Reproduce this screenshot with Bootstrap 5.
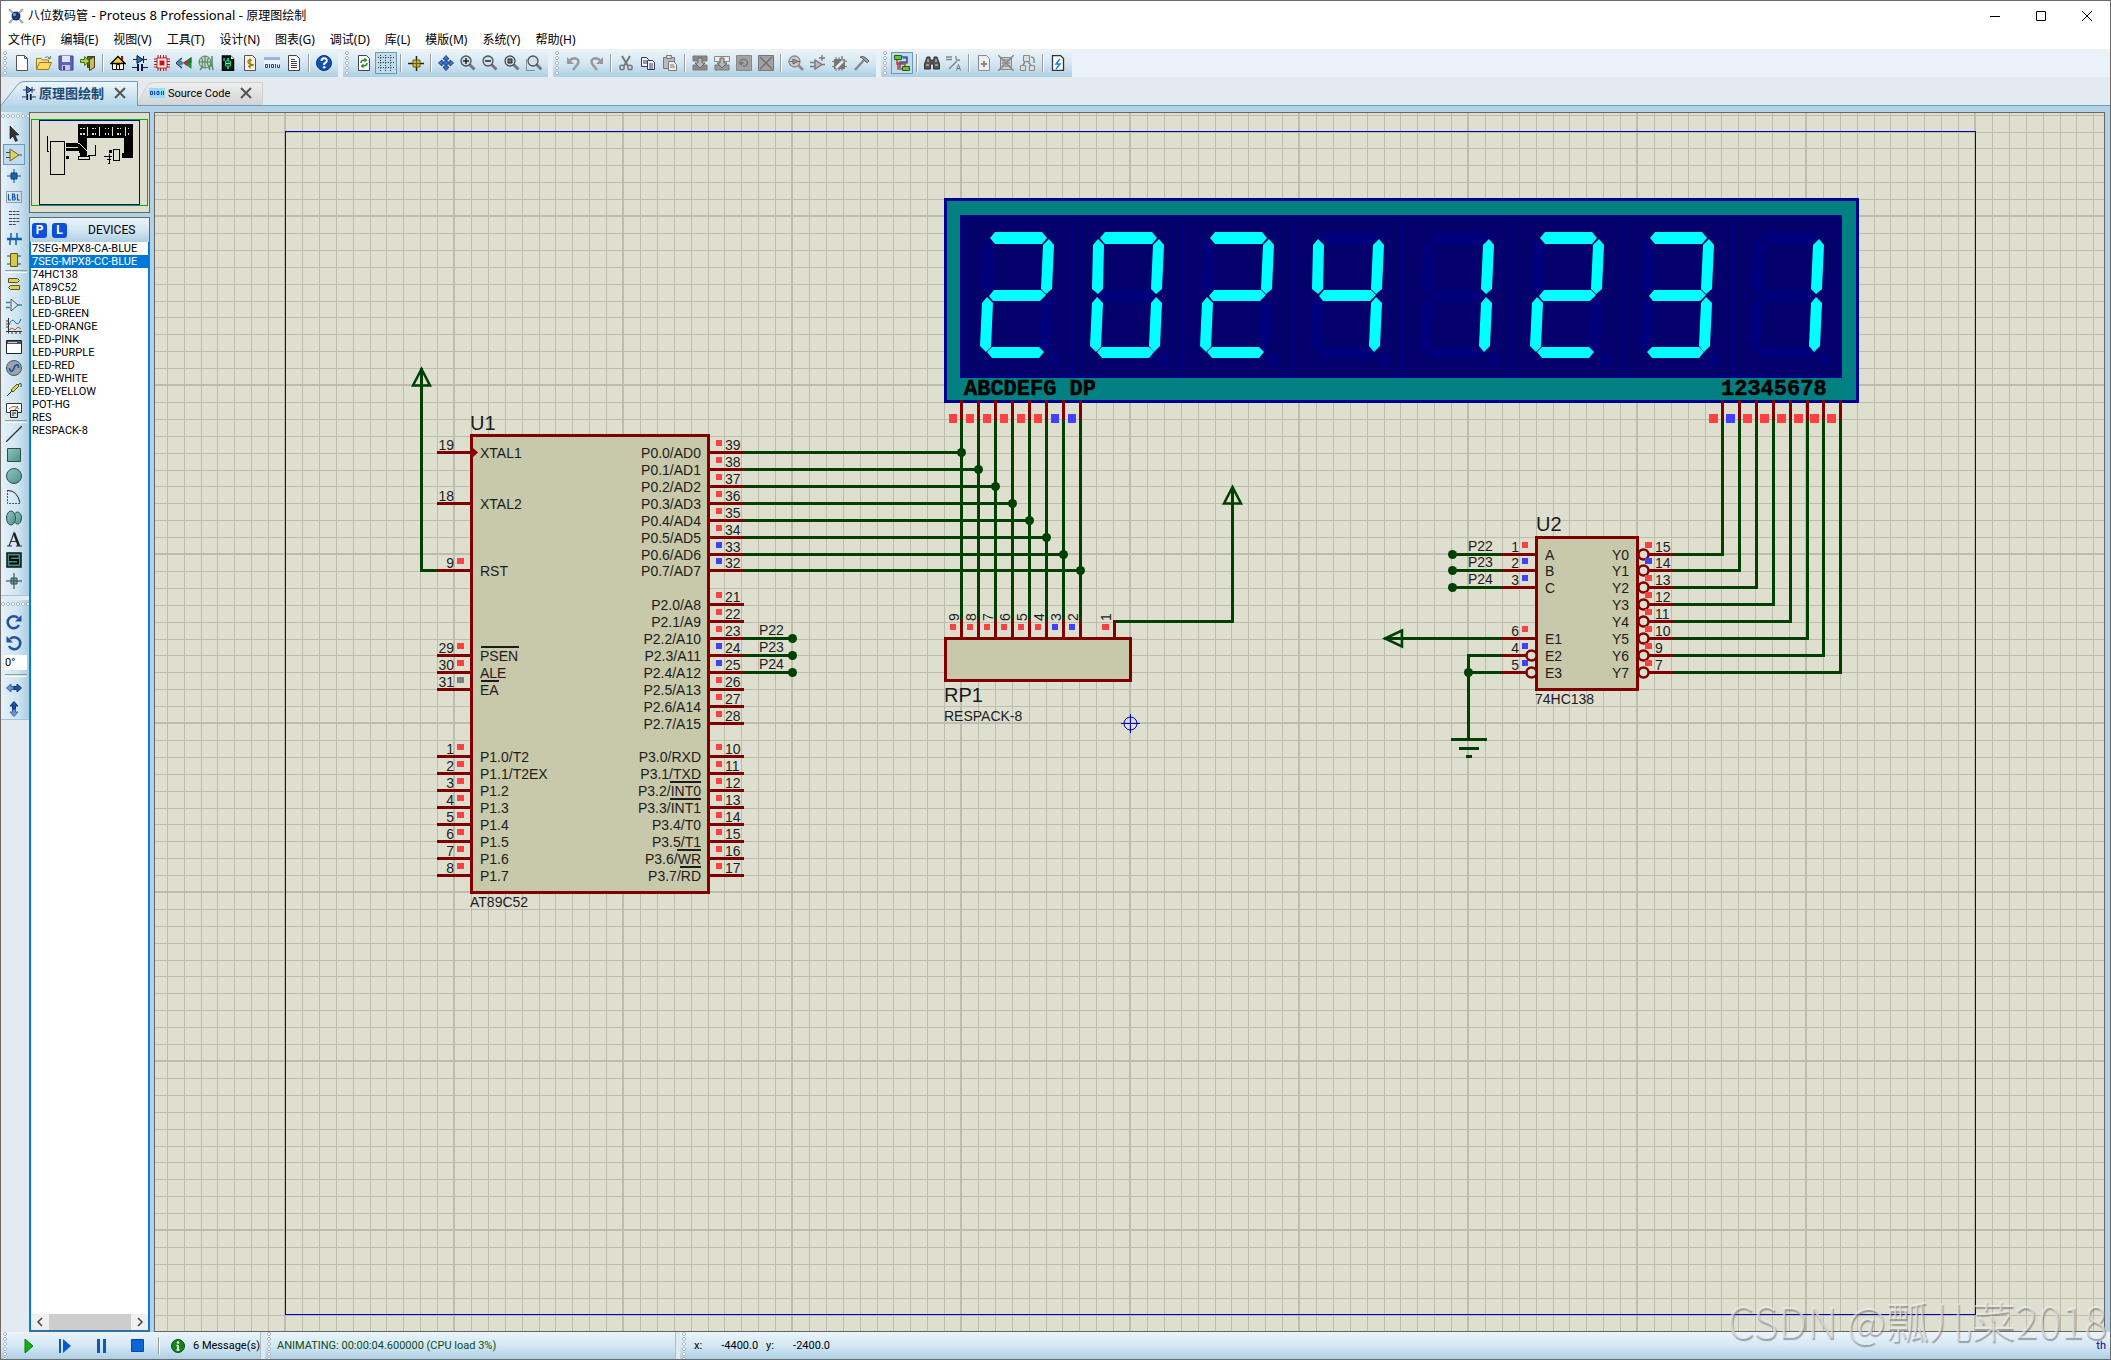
<!DOCTYPE html>
<html lang="zh-CN">
<head>
<meta charset="utf-8">
<meta name="viewport" content="width=device-width, initial-scale=1">
<title>八位数码管 - Proteus 8 Professional - 原理图绘制</title>
<link href="https://cdn.jsdelivr.net/npm/bootstrap@5.3.0/dist/css/bootstrap.min.css" rel="stylesheet">
<style>
  :root { --edge:#6e6a6a; --bar:#e3ebf1; --grad:linear-gradient(#e8f3fa,#d3e6f2 50%,#aecfe3); }
  body { font-family:Roboto,"Noto Sans CJK SC",sans-serif; font-size:11px; line-height:13px; color:#000; background:var(--bar); border:1px solid var(--edge); }
  button { font:inherit; color:inherit; background:none; border:0; padding:0; }
  svg { display:block; }
  .titlebar { height:29px; font-family:"Noto Sans","Noto Sans CJK SC",sans-serif; font-size:12px; padding-left:7px; background:#fff; }
  .latin { font-size:13px; }
  .winbtn { width:46px; height:29px; }
  .menus { height:19px; font-family:"Noto Sans","Noto Sans CJK SC",sans-serif; font-size:12px; line-height:19px; gap:1px; background:#fff; }
  .menus button { padding:0 7px; }
  .toolrow { height:28px; background:#e9f2f9; border-top:2px solid #f0f0f0; gap:5px; }
  .toolgroup { background:var(--grad); height:26px; padding:0 3px 2px 0; }
  .grip { width:10px; height:24px; background:radial-gradient(circle at 4px 2px,#fff 1px,#a9b7c2 1px,#a9b7c2 2px,transparent 2px) 0 0/10px 5px repeat-y; }
  .tool { width:22px; height:22px; display:grid; place-items:center; flex:none; border:1px solid transparent; }
  .pressed { border-color:#6a9ab8; background:#bfdcec; }
  .vsep { width:8px; height:18px; background:linear-gradient(#9a9a9a,#9a9a9a) 3px 0/1px 100% no-repeat,linear-gradient(#fff,#fff) 4px 0/1px 100% no-repeat; }
  .tabrow { height:29px; padding-top:4px; border-bottom:1px solid #6c9fbe; }
  .doc-tab { position:relative; height:24px; font-size:11px; }
  .doc-tab > svg:first-child { position:absolute; inset:0; }
  .doc-tab > * { position:relative; }
  .tab-one { width:137px; padding-left:21px; font-weight:700; font-size:13px; color:#1f4a70; gap:3px; }
  .tab-two { width:126px; padding-left:11px; gap:3px; }
  .closer { margin-left:7px; }
  .work { background:#b2d2e5; padding-top:6px; min-height:0; }
  .rail { width:28px; background:var(--bar); }
  .railgroup { width:28px; background:linear-gradient(90deg,#e4f1f9,#cfe5f2 60%,#abcde1); border-bottom:1px solid #a5c4d7; }
  .railgroup .tool { width:22px; height:21px; margin-left:2px; }
  .hgrip { height:11px; background:radial-gradient(circle at 2px 4px,#fff 1px,#a9b7c2 1px,#a9b7c2 2px,transparent 2px) 0 0/5px 10px repeat-x; }
  .hsep { height:3px; margin:0 2px 0 4px; border-top:1px solid #9a9a9a; border-bottom:1px solid #fff; }
  .angle { width:23px; height:15px; margin:2px 0 0 3px; border:0; padding:0 1px; background:#fff; font-size:11px; }
  .side { width:121px; }
  .overview { height:101px; border:1px solid #666; background:#dfdfd0; }
  .picker { border:1px solid #666; margin-top:4px; }
  .picker-head { height:24px; background:var(--grad); padding-left:2px; gap:5px; font-size:12px; }
  .pl { width:15px; height:15px; border-radius:3px; background:#0d50d8; color:#fff; line-height:15px; font-size:12px; font-weight:700; text-align:center; }
  .devs { border:solid #0078d7; border-width:0 1px 1px; background:#fff; }
  .devs li { height:13px; padding-left:1px; white-space:nowrap; }
  .devs .picked { background:#0078d7; color:#fff; }
  .hscroll { height:16px; background:#f0f0f0; }
  .hscroll i { width:82px; background:#cdcdcd; }
  .sheet { margin:0 5px 0 4px; border:1px solid #666; background:#dfdfd0; position:relative; overflow:hidden; min-width:0; }
  .sheet > svg { position:absolute; inset:0; width:100%; height:100%; font-family:"Liberation Sans",Arial,sans-serif; font-size:14px; fill:#1c1c1c; }
  .statusrow { height:27px; background:linear-gradient(#e9f4fb,#d4e8f4 50%,#add0e5); }
  .statusrow .grip { height:27px; }
  .statusrow .cell { border-right:1px solid #a4c0d2; }
  .run { width:36px; display:grid; place-items:center; }
  .gapbar { width:4px; background:#dfe9f0; }
  .readout { width:400px; padding-left:2px; color:#0f4a18; }
  .coord { width:40px; text-align:right; }
  .thou { color:#00009c; }
  .wm { position:absolute; right:3px; bottom:20px; font:300 43px/40px "Noto Sans CJK SC",sans-serif; color:rgba(240,240,240,.6); text-shadow:1px 2px 1px rgba(110,110,110,.6); pointer-events:none; white-space:nowrap; }
</style>
</head>
<body class="d-flex flex-column vh-100 overflow-hidden position-relative">
<svg width="0" height="0" class="position-absolute">
  <defs>
    <linearGradient id="gt" x2="0" y2="1"><stop stop-color="#eef7fc"/><stop offset="1" stop-color="#b4d6ea"/></linearGradient>
    <linearGradient id="gg" x2="0" y2="1"><stop stop-color="#eee"/><stop offset="1" stop-color="#d4d4d4"/></linearGradient>
    <linearGradient id="teal" x2="1" y2="1"><stop stop-color="#8cc6be"/><stop offset="1" stop-color="#4f918b"/></linearGradient>
    <symbol id="new" viewBox="0 0 16 16"><path d="M2.500.5h8l3 3v12h-11z" fill="#fff" stroke="#555"/><path d="M10.500.500v3h3" fill="none" stroke="#555"/></symbol>
    <symbol id="open" viewBox="0 0 16 16"><path d="M.5 14V3.500h5l1 1.500h6v3" fill="#f8e28a" stroke="#9c7a18"/><path d="M.5 14.500l3-7h12l-3 7z" fill="#fbd95c" stroke="#9c7a18"/><path d="M9 2.500q3-2 5 1M12 3.500h2.500V1" fill="none" stroke="#777"/></symbol>
    <symbol id="save" viewBox="0 0 16 16"><path d="M1 1h14v14H2l-1-1z" fill="#5b62c4" stroke="#39408e"/><path d="M4 1h8v6H4z" fill="#e4e6f4"/><path d="M4 10h8v5H4z" fill="#c9cbd8"/><path d="M5 11h2v4H5z" fill="#39408e"/></symbol>
    <symbol id="exit" viewBox="0 0 16 16"><path d="M7.500 1.500h7v11h-7z" fill="#655d2c" stroke="#3d3a22"/><path d="M9.500 4.500l5-3v11l-5 3z" fill="#c9bd55" stroke="#3d3a22"/><path d="M.5 4.500h4v-3l5 4.500-5 4.500v-3h-4z" fill="#a6d84b" stroke="#4a6d12"/></symbol>
    <symbol id="home" viewBox="0 0 16 16"><path d="M11 1h2v5h-2z" fill="#c00"/><path d="M2.500 7.500v7h11v-7" fill="#fff" stroke="#000"/><path d="M1 8.500l7-7 7 7z" fill="#ffd21a" stroke="#000" stroke-width="1.300"/><path d="M6.500 9.500h3v5h-3z" fill="#ffe680" stroke="#000"/></symbol>
    <symbol id="schem" viewBox="0 0 16 16"><path d="M1 4.500h14M11.500 1v7M0 12.500h5M11 12.500h5" stroke="#223" fill="none"/><path d="M6 9v7M10 9v7" stroke="#114" stroke-width="2"/><path d="M5 0.500v8l6-4z" fill="#1779c8" stroke="#114"/></symbol>
    <symbol id="chip" viewBox="0 0 16 16"><path d="M4 0v16M6.500 0v16M9.500 0v16M12 0v16M0 4h16M0 6.500h16M0 9.500h16M0 12h16" stroke="#c11"/><path d="M3 3h10v10H3z" fill="#fff" stroke="#c11"/><path d="M5.500 5.500h5v5h-5z" fill="#c11"/></symbol>
    <symbol id="eye3d" viewBox="0 0 16 16"><path d="M15.500 2v12L7 8z" fill="#18924a"/><path d="M15.500 2v6H7z" fill="#177a3c"/><path d="M11 5v6l-4-3z" fill="#c22d2d"/><path d="M6 3L0 8l6 5" fill="none" stroke="#335" stroke-width="1.300"/><circle cx="4.500" cy="8" r="2.500" fill="#4b86b4"/></symbol>
    <symbol id="globe" viewBox="0 0 16 16"><g fill="none" stroke="#577f63"><circle cx="7" cy="7" r="6" fill="#bcd8bd"/><path d="M1 7h12M7 1v12M3.500 2.500q3 4.500 0 9M10.500 2.500q-3 4.500 0 9"/></g><path d="M14 1v8l-3 4 1 2M14 9l1 6M2 15l3-4" fill="none" stroke="#586" stroke-width="1.500"/></symbol>
    <symbol id="gerber" viewBox="0 0 16 16"><path d="M2.500 1h8l3 3v11.500h-11z" fill="#021" stroke="#000" stroke-width="1.500"/><path d="M11 1v3h3z" fill="#fff"/><path d="M8 3v3M8 11v3M5 8.500h6" stroke="#3fe" stroke-width="1.300"/><path d="M5.500 6h5v5h-5z" fill="none" stroke="#3c5"/><path d="M4 3v3" stroke="#3fe"/></symbol>
    <symbol id="bom" viewBox="0 0 16 16"><path d="M2.500.5h8l3 3v12h-11z" fill="#f4f2e4" stroke="#555"/><path d="M10 5.500Q6 4 6 6.500T10 9.500T6 11.500M8 3.500v10" fill="none" stroke="#9a7b12" stroke-width="1.300"/></symbol>
    <symbol id="code" viewBox="0 0 16 16"><path d="M0 2h16v3H0z" fill="#9db5d8"/><path d="M0 5h16v8H0z" fill="#e9f3fc"/><path d="M1.500 9.500h2v3h-2zM5.500 9v4M7.500 9.500h2v3h-2zM11.500 9v4M13.500 9.500v3h2v-3" fill="none" stroke="#23c"/></symbol>
    <symbol id="notes" viewBox="0 0 16 16"><path d="M2.500.5h8l3 3v12h-11z" fill="#fff" stroke="#444"/><path d="M5 4.500h4M5 6.500h6M5 8.500h6M5 10.500h6M5 12.500h6" stroke="#444"/></symbol>
    <symbol id="help" viewBox="0 0 16 16"><circle cx="8" cy="8" r="7.500" fill="#1650ae" stroke="#0b2f74"/><path d="M5.500 6q0-2.800 2.700-2.800T10.800 6Q10.800 7.300 8.200 8.600V10" fill="none" stroke="#fff" stroke-width="2"/><circle cx="8.200" cy="12.300" r="1.300" fill="#fff"/></symbol>
    <symbol id="redraw" viewBox="0 0 16 16"><path d="M2.500.5h8l3 3v12h-11z" fill="#fff" stroke="#444"/><path d="M5 8q0-3 4-3M11 8q0 3-4 3" fill="none" stroke="#2a8a1c" stroke-width="1.600"/><path d="M8.500 2.500l3 2.500-3 2.500zM7.500 8.500L4.500 11l3 2.500z" fill="#2a8a1c"/></symbol>
    <symbol id="dots" viewBox="0 0 16 16"><path d="M0 2.500h16M0 7.500h16M0 12.500h16M2.500 0v16M7.500 0v16M12.500 0v16" stroke="#333" stroke-dasharray="1 1.500"/></symbol>
    <symbol id="origin" viewBox="0 0 16 16"><path d="M0 8.500h16M8.500 1v15" stroke="#222" stroke-width="1.500"/><path d="M5 5h7v7H5z" fill="#cbb832" stroke="#6a5d08"/><path d="M5 8.500h7M8.500 5v7" stroke="#6a5d08"/></symbol>
    <symbol id="pan" viewBox="0 0 16 16"><path d="M8 .5l3 3.500H9v3h3V5l3.500 3L12 11V9H9v3h2l-3 3.500L5 12h2V9H4v2L.5 8 4 5v2h3V4H5z" fill="#3a7ad4" stroke="#153c86"/></symbol>
    <symbol id="zbase" viewBox="0 0 16 16"><path d="M9.500 9.500l5 5" stroke="#777" stroke-width="3"/><circle cx="6" cy="6" r="5" fill="#d3e0e8" stroke="#4b5258" stroke-width="1.300"/></symbol>
    <symbol id="zin" viewBox="0 0 16 16"><use href="#zbase"/><path d="M3 6h6M6 3v6" stroke="#222" stroke-width="1.500"/></symbol>
    <symbol id="zout" viewBox="0 0 16 16"><use href="#zbase"/><path d="M3 6h6" stroke="#222" stroke-width="1.500"/></symbol>
    <symbol id="zall" viewBox="0 0 16 16"><use href="#zbase"/><path d="M4 4h4v4H4z" fill="#777" stroke="#222"/></symbol>
    <symbol id="zarea" viewBox="0 0 16 16"><use href="#zbase" x="1"/><path d="M.5 4.500v11h9" fill="none" stroke="#444" stroke-dasharray="1 1"/></symbol>
    <symbol id="undo" viewBox="0 0 16 16"><path d="M4 5q4-3 7-1t0 6l-4 5" fill="none" stroke="#999" stroke-width="2.500"/><path d="M1 2v7h7z" fill="#999"/></symbol>
    <symbol id="cut" viewBox="0 0 16 16"><path d="M4 1l6 10M12 1L6 11" stroke="#777" stroke-width="2"/><circle cx="4" cy="12.500" r="2.200" fill="none" stroke="#777" stroke-width="1.500"/><circle cx="12" cy="12.500" r="2.200" fill="none" stroke="#777" stroke-width="1.500"/></symbol>
    <symbol id="copy" viewBox="0 0 16 16"><g fill="#f6f8ff" stroke="#33375c"><path d="M1.500 2.500h5l2 2v7h-7z"/><path d="M7.500 5.500h5l2 2v7h-7z"/></g><path d="M3 6h4M3 8h4M9 9h4M9 11h4M9 13h4" stroke="#33375c"/></symbol>
    <symbol id="paste" viewBox="0 0 16 16"><path d="M1.500 2.500h11v11h-11z" fill="#bbb" stroke="#777"/><path d="M4.500.5h5v3h-5z" fill="#ddd" stroke="#777"/><path d="M6.500 6.500h5l3 3v6h-8z" fill="#eee" stroke="#777"/><path d="M8 10h4M8 12h5" stroke="#777"/></symbol>
    <symbol id="blk1" viewBox="0 0 16 16"><path d="M1 1h14v5H1zM1 10h14v5H1z" fill="#8a8a8a" stroke="#777"/><path d="M6 3h4v5h3l-5 5-5-5h3z" fill="#b8b8b8" stroke="#666"/></symbol>
    <symbol id="blk2" viewBox="0 0 16 16"><path d="M.5 1.500h15v5H.5z" fill="#eee" stroke="#888"/><path d="M1 10h14v5H1z" fill="#999" stroke="#777"/><path d="M6 3h4v5h3l-5 5-5-5h3z" fill="#b8b8b8" stroke="#666"/></symbol>
    <symbol id="blk3" viewBox="0 0 16 16"><path d="M.5.5h15v15H.5z" fill="#a2a2a2" stroke="#888"/><path d="M4 6q3-3 6-1t0 6H7" fill="none" stroke="#777" stroke-width="1.500"/><path d="M2 7h6l-3 4z" fill="#777"/></symbol>
    <symbol id="blk4" viewBox="0 0 16 16"><path d="M.5.5h15v15H.5z" fill="#a2a2a2" stroke="#777"/><path d="M2 2l12 12M14 2L2 14" stroke="#707070" stroke-width="1.500"/></symbol>
    <symbol id="pick" viewBox="0 0 16 16"><path d="M10 10l5 5" stroke="#888" stroke-width="2.500"/><circle cx="6.500" cy="6.500" r="5.500" fill="#ccc" stroke="#888" stroke-width="1.300"/><path d="M5 4v5l5-2.500zM2 6.500h3M10 6.500h2" fill="#999" stroke="#666"/></symbol>
    <symbol id="make" viewBox="0 0 16 16"><path d="M5 5v9l7-4.500zM0 7.500h5M0 11.500h5M12 9.500h3M12 0v6M9 3h6" fill="#bbb" stroke="#777" stroke-width="1.300"/></symbol>
    <symbol id="pack" viewBox="0 0 16 16"><path d="M2 4h11v10H2z" fill="#777"/><path d="M4 2v14M7 2v14M10 2v14M0 6.500h15M0 11.500h15" stroke="#777"/><path d="M4 13l7-7" stroke="#eee" stroke-width="2.500"/><path d="M10 1q-1 5 4.500 5" stroke="#999" stroke-width="2" fill="none"/></symbol>
    <symbol id="hammer" viewBox="0 0 16 16"><path d="M1 15L10 5" stroke="#888" stroke-width="2.500"/><path d="M6 2q4-2 7 2l2 2-2 2-5-5z" fill="#999" stroke="#666"/></symbol>
    <symbol id="auto" viewBox="0 0 16 16"><path d="M9 3h4v5H4v6h5M3 5v4h8v4" fill="none" stroke="#d33c1c" stroke-width="1.500"/><path d="M8 2h5v5H6v6" fill="none" stroke="#2263c4" stroke-width="1.500"/><path d="M.5.5h7v4h-7zM8.500 11.500h7v4h-7z" fill="#62c437" stroke="#265c12"/></symbol>
    <symbol id="find" viewBox="0 0 16 16"><path d="M3 2h3v3h4V2h3l2.500 7v5h-6V9h-3v5h-6V9z" fill="#555" stroke="#333"/><path d="M2 10h3M11 10h3M4 4v3M12 4v3" stroke="#ddd"/></symbol>
    <symbol id="prop" viewBox="0 0 16 16"><path d="M0 2h6M0 4.500h6M3 14l8-8M10 1q-1 5 4 4" fill="none" stroke="#888" stroke-width="1.500"/><path d="M10.500 15.500l2-6 2 6M11 13.500h3" fill="none" stroke="#777"/></symbol>
    <symbol id="addsheet" viewBox="0 0 16 16"><path d="M2.500.5h8l3 3v12h-11z" fill="#eee" stroke="#888"/><path d="M5 9h6M8 6v6" stroke="#888" stroke-width="2"/></symbol>
    <symbol id="delsheet" viewBox="0 0 16 16"><path d="M2.500 2.500h11v12h-11z" fill="#ccc" stroke="#888"/><path d="M4 5h8M4 8h8M4 11h8" stroke="#777"/><path d="M0 0l16 16M16 0L0 16" stroke="#888" stroke-width="1.500"/></symbol>
    <symbol id="zoomsheet" viewBox="0 0 16 16"><path d="M3.500.5h6v6h-6zM.5 10.500h5v5h-5zM9.500 10.500h5v5h-5z" fill="#ddd" stroke="#888"/><path d="M5 7L3 10M8 7l3 3M11 2q4 0 3 6" fill="none" stroke="#888" stroke-width="1.500"/></symbol>
    <symbol id="erc" viewBox="0 0 16 16"><path d="M2.500.5h8l3 3v12h-11z" fill="#fff" stroke="#333" stroke-width="1.300"/><path d="M10 4L6 9h4l-4 5" fill="none" stroke="#1c80cf" stroke-width="1.500"/></symbol>
    <symbol id="cur" viewBox="0 0 16 16"><path d="M4 0l9 9H9l2.500 5.500-2 1L7 10l-3 3z" fill="#333" stroke="#111" stroke-width=".6"/></symbol>
    <symbol id="comp" viewBox="0 0 16 16"><path d="M0 5.500h4M0 10.500h4M13 8h3" stroke="#444"/><path d="M4 2v12l9-6z" fill="#ddd26a" stroke="#6c672c"/></symbol>
    <symbol id="junc" viewBox="0 0 16 16"><path d="M1 8h14M8 1v14" stroke="#245" /><path d="M5 5h6v6H5z" fill="#1565c0" stroke="#0c3c78"/></symbol>
    <symbol id="lbl" viewBox="0 0 16 16"><path d="M.5 2.500h15v11H.5z" fill="none" stroke="#555" stroke-dasharray="1 1"/><path d="M2.500 5v6H5M6.500 5v6h2q1.500-1.500 0-3h-2 1.500q1.500-1.500 0-3zM11.500 5v6H14" fill="none" stroke="#1554a8" stroke-width="1.200"/></symbol>
    <symbol id="script" viewBox="0 0 16 16"><path d="M3 1.500h11M3 4.500h11M3 8.500h11M3 11.500h11M3 14.500h7" stroke="#444" stroke-dasharray="3 .7"/></symbol>
    <symbol id="bus" viewBox="0 0 16 16"><path d="M1 8h15M5 2v6M11 2v6M4 8v6M10 8v6" stroke="#1361b3" stroke-width="1.500"/><path d="M1 8h15" stroke="#1361b3" stroke-width="2.500"/></symbol>
    <symbol id="sub" viewBox="0 0 16 16"><path d="M4.500 1.500h7v13h-7z" fill="#d6ca4c" stroke="#5c561c"/><path d="M1 4h3M1 12h3M12 4h3M12 12h3" stroke="#444"/></symbol>
    <symbol id="term" viewBox="0 0 16 16"><path d="M2.500 2.500h9l2 2-2 2h-9zM13.500 9.500h-9l-2 2 2 2h9z" fill="#dcd15a" stroke="#5c561c"/></symbol>
    <symbol id="pin" viewBox="0 0 16 16"><path d="M0 5.500h4M0 10.500h4M12 8h4" stroke="#2b8f8a" stroke-width="1.500"/><path d="M5 2v12l7-6z" fill="none" stroke="#555"/></symbol>
    <symbol id="graph" viewBox="0 0 16 16"><path d="M2.500 0v15.500M0 13.500h16M0 3h2M0 6h2M0 9h2M6 13v3M10 13v3M14 13v3" stroke="#333"/><path d="M3 7q3-8 6-3t6-3" fill="none" stroke="#1b62b5"/><path d="M3 12l3-2 3 2 3-3 3 2" fill="none" stroke="#c43"/></symbol>
    <symbol id="tape" viewBox="0 0 16 16"><path d="M.5 1.500h15v13H.5z" fill="#fff" stroke="#222"/><path d="M1 2h14v3H1z" fill="#555"/><path d="M2 3.500h9" stroke="#ccc"/></symbol>
    <symbol id="gen" viewBox="0 0 16 16"><circle cx="8" cy="8" r="7.500" fill="#9aa4ad" stroke="#4e565c"/><path d="M3.500 8Q4 12 6 11T8 8T10.500 5T12.500 8" fill="none" stroke="#134fa0" stroke-width="1.600"/></symbol>
    <symbol id="probe" viewBox="0 0 16 16"><path d="M1 15l5-5M12 4q4-4 3 2" fill="none" stroke="#333"/><path d="M5 9l6-6 2 2-6 6z" fill="#e4d94e" stroke="#5c561c"/></symbol>
    <symbol id="meter" viewBox="0 0 16 16"><path d="M.5 1.500h15v9H.5z" fill="#fff" stroke="#333"/><path d="M3 7q5-5 10 0" fill="none" stroke="#c43"/><path d="M8 9l4-5" stroke="#1b62b5"/><path d="M4.500 8.500h7v7h-7z" fill="#ddd" stroke="#222"/><path d="M6 11h4M6 13h2" stroke="#222"/></symbol>
    <symbol id="ln" viewBox="0 0 16 16"><path d="M0 16L16 0" stroke="#333" stroke-width="1.300"/></symbol>
    <symbol id="bx" viewBox="0 0 16 16"><path d="M1.500 1.500h13v13h-13z" fill="url(#teal)" stroke="#2c4f4c"/></symbol>
    <symbol id="circ" viewBox="0 0 16 16"><circle cx="8" cy="8" r="7.500" fill="url(#teal)" stroke="#2c4f4c"/></symbol>
    <symbol id="arc" viewBox="0 0 16 16"><path d="M1.500 1v13.500H14" fill="none" stroke="#1d5fb5" stroke-dasharray="2 1"/><path d="M2 1.500q9 0 12 12" fill="none" stroke="#222"/></symbol>
    <symbol id="clos" viewBox="0 0 16 16"><g fill="url(#teal)" stroke="#2c4f4c"><ellipse cx="11.500" cy="8" rx="4" ry="6"/><ellipse cx="5" cy="8" rx="4.500" ry="7"/></g></symbol>
    <symbol id="txt" viewBox="0 0 16 16"><path d="M1 15h5M10 15h6M3 15L8 2l5 13M5 10.500h6" fill="none" stroke="#333" stroke-width="1.200"/><path d="M8 2l5 13" stroke="#222" stroke-width="2.500"/></symbol>
    <symbol id="sym" viewBox="0 0 16 16"><path d="M1 1h14v14H1z" fill="#3f8f88" stroke="#111" stroke-width="1.500"/><path d="M12.500 4.500H4v3.500h8v3.500H3.500" fill="none" stroke="#000" stroke-width="2"/></symbol>
    <symbol id="mark2" viewBox="0 0 16 16"><path d="M0 8h16M8 0v16" stroke="#333"/><path d="M5 5h6v6H5z" fill="#69aaa3" stroke="#2c4f4c"/><path d="M5 8h6M8 5v6" stroke="#2c4f4c"/></symbol>
    <symbol id="rot" viewBox="0 0 16 16"><path d="M13 11A6 6 0 1 1 12 4" fill="none" stroke="#24509c" stroke-width="2.500"/><path d="M15.500 1v6.500H9z" fill="#24509c"/></symbol>
    <symbol id="mirh" viewBox="0 0 16 16"><path d="M.5 8L5 4v2.500h3v3H5V12z" fill="#6d93dc" stroke="#3d62b0"/><path d="M15.500 8L11 4v2.500H8v3h3V12z" fill="#1f4fa8" stroke="#123477"/></symbol>
    <symbol id="xx" viewBox="0 0 12 12"><path d="M1 1l10 10M11 1L1 11" stroke="#555" stroke-width="2"/></symbol>
  </defs>
</svg>

<header class="titlebar d-flex align-items-center">
  <svg width="16" height="16" viewBox="0 0 16 16" class="me-1"><path d="M2 2l12 12M14 2L2 14" stroke="#c8a878" stroke-width="2"/><circle cx="8" cy="8" r="4.500" fill="#173a80"/><circle cx="6.500" cy="6.500" r="1.500" fill="#7ea4dc"/><g fill="#9eb0c8"><circle cx="2" cy="2" r="1.500"/><circle cx="14" cy="2" r="1.500"/><circle cx="2" cy="14" r="1.500"/><circle cx="14" cy="14" r="1.500"/></g></svg>
  <span>八位数码管<span class="latin"> - Proteus 8 Professional - </span>原理图绘制</span>
  <div class="ms-auto d-flex">
    <button class="winbtn" aria-label="最小化"><svg class="mx-auto" width="10" height="10"><path d="M0 5.500h10" stroke="#000"/></svg></button>
    <button class="winbtn" aria-label="最大化"><svg class="mx-auto" width="10" height="10"><path d="M.5.5h9v9h-9z" fill="none" stroke="#000"/></svg></button>
    <button class="winbtn" aria-label="关闭"><svg class="mx-auto" width="10" height="10"><path d="M0 0l10 10M10 0L0 10" stroke="#000"/></svg></button>
  </div>
</header>
<nav class="menus d-flex">
  <button>文件(F)</button><button>编辑(E)</button><button>视图(V)</button><button>工具(T)</button><button>设计(N)</button><button>图表(G)</button><button>调试(D)</button><button>库(L)</button><button>模版(M)</button><button>系统(Y)</button><button>帮助(H)</button>
</nav>
<div class="toolrow d-flex" id="toolrow"></div>
<div class="tabrow d-flex">
  <div class="doc-tab tab-one d-flex align-items-center">
    <svg width="137" height="25"><path d="M0 24.500L14 7Q18 .5 24 .5H136.500V25H0z" fill="url(#gt)"/><path d="M0 24.500L14 7Q18 .5 24 .5H136.500V25" fill="none" stroke="#6c9fbe"/></svg>
    <svg width="14" height="16"><use href="#schem"/></svg><span>原理图绘制</span>
    <button class="closer" aria-label="关闭"><svg width="12" height="12"><use href="#xx"/></svg></button>
  </div>
  <div class="doc-tab tab-two d-flex align-items-center">
    <svg width="125" height="24"><path d="M0 22L8 6Q12 1.500 16 1.500H124.500V24H0z" fill="url(#gg)" stroke="#d0d0d0"/></svg>
    <svg width="16" height="10" viewBox="0 0 16 10"><path d="M0 0h16v10H0z" fill="#8fe0f0"/><path d="M1.500 3.500h2v3h-2zM5.500 3v4M8 3.500h2v3H8zM12.500 3v4M14.500 3v4" fill="none" stroke="#23c"/></svg><span>Source Code</span>
    <button class="closer" aria-label="关闭"><svg width="12" height="12"><use href="#xx"/></svg></button>
  </div>
</div>

<main class="work d-flex flex-fill">
  <div class="rail" id="rail"></div>
  <aside class="side d-flex flex-column">
    <div class="overview">
      <svg width="119" height="99" viewBox="90 16 357 297" fill="none" shape-rendering="crispEdges">
        <path d="M94 35h349v258H94z" stroke="#00b000" stroke-width="3"/><path d="M118 38h301v252H118z" stroke="#0000c0" stroke-width="3"/>
        <path d="M234 50h165v102h-33v-14h6V95H262v50h-20l-6-14h-38V105h36z" fill="#000"/>
        <path d="M198 118h36M236 106l28 26M262 93h110" stroke="#dfdfd0" stroke-width="3"/>
        <path d="M261 57v28M299 57v28M337 57v28M375 57v28" stroke="#dfdfd0" stroke-width="3"/>
        <path d="M241 62h16M241 79h14M277 62h12M277 79h12M315 62h12M315 79h12M352 62h12M352 79h12M384 62h8M384 79h8" stroke="#dfdfd0" stroke-width="5" stroke-dasharray="4 5"/>
        <path d="M151 102h42v97h-42zM142 86v44h6M236 145h33v9h-33zM264 142h23v-31M340 124h18v33h-18zM312 146h24M328 140v30M322 154h12M325 166h6M366 136h14" stroke="#000" stroke-width="3"/><path d="M198 144h9v9h-9zM327 126h9v9h-9z" fill="#000"/>
      </svg>
    </div>
    <section class="picker d-flex flex-column flex-fill">
      <div class="picker-head d-flex align-items-center"><button class="pl">P</button><button class="pl">L</button><span class="ms-3">DEVICES</span></div>
      <div class="devs d-flex flex-column flex-fill">
        <ul class="list-unstyled m-0 flex-fill">
          <li>7SEG-MPX8-CA-BLUE</li><li class="picked">7SEG-MPX8-CC-BLUE</li><li>74HC138</li><li>AT89C52</li><li>LED-BLUE</li><li>LED-GREEN</li><li>LED-ORANGE</li><li>LED-PINK</li><li>LED-PURPLE</li><li>LED-RED</li><li>LED-WHITE</li><li>LED-YELLOW</li><li>POT-HG</li><li>RES</li><li>RESPACK-8</li>
        </ul>
        <div class="hscroll d-flex justify-content-center">
          <svg width="17" height="16"><path d="M10 4L6 8l4 4" fill="none" stroke="#444" stroke-width="1.500"/></svg><i></i><svg width="17" height="16"><path d="M7 4l4 4-4 4" fill="none" stroke="#444" stroke-width="1.500"/></svg>
        </div>
      </div>
    </section>
  </aside>
  <section class="sheet flex-fill"><svg id="canvas" role="img" aria-label="原理图"></svg></section>
</main>

<footer class="statusrow d-flex align-items-stretch">
  <div class="cell d-flex align-items-center">
    <div class="grip"></div>
    <button class="run" aria-label="运行"><svg width="10" height="14"><path d="M1 0l8 7-8 7z" fill="#12b012" stroke="#0a7a0a"/></svg></button>
    <button class="run" aria-label="单步"><svg width="12" height="14"><path d="M1 0v14" stroke="#0a58c4" stroke-width="2"/><path d="M4 0l8 7-8 7z" fill="#0a58c4"/></svg></button>
    <button class="run" aria-label="暂停"><svg width="9" height="14"><path d="M0 0h3v14H0zM6 0h3v14H6z" fill="#0a58c4"/></svg></button>
    <button class="run" aria-label="停止"><svg width="13" height="13"><path d="M.5.5h12v12H.5z" fill="#0a66d6" stroke="#084a9c"/></svg></button>
    <span class="vsep me-2"></span>
    <svg width="14" height="14" class="me-2"><circle cx="7" cy="7" r="6.500" fill="#15851a" stroke="#0a4a0d"/><path d="M7 6v5M5.500 6.500H7M5.500 11h3" stroke="#fff" stroke-width="1.500"/><circle cx="7" cy="3.500" r="1.200" fill="#fff"/></svg>
    <span>6 Message(s)</span>
  </div>
  <div class="gapbar"></div>
  <div class="cell d-flex align-items-center"><div class="grip"></div><span class="readout text-nowrap">ANIMATING: 00:00:04.600000 (CPU load 3%)</span></div>
  <div class="gapbar"></div>
  <div class="d-flex align-items-center flex-fill"><div class="grip"></div><span class="ms-1">x:</span><span class="coord ms-3">-4400.0</span><span class="ms-2">y:</span><span class="coord ms-3">-2400.0</span><span class="thou ms-auto me-1">th</span></div>
</footer>
<div class="wm">CSDN @瓢儿菜2018</div>

<script src="https://cdn.jsdelivr.net/npm/bootstrap@5.3.0/dist/js/bootstrap.bundle.min.js"></script>
<script>
// Toolbars: "|" is a separator, "*" marks a pressed button, "~" a mirrored glyph
const tool = n => {
  const on = n.includes('*'), flip = n.includes('~'), id = n.replace(/[*~]/, '');
  return `<button class="tool${on ? ' pressed' : ''}" aria-label="${id}"><svg width="16" height="16"><use href="#${id}"${flip ? ' transform="matrix(-1 0 0 1 16 0)"' : ''}/></svg></button>`;
};
const bars = ['new open save exit | home schem chip eye3d globe gerber bom code notes | help',
  'redraw dots* | origin | pan zin zout zall zarea',
  'undo undo~ | cut copy paste | blk1 blk2 blk3 blk4 | pick make pack hammer',
  'auto* | find prop | addsheet delsheet zoomsheet | erc'];
document.getElementById('toolrow').innerHTML = bars.map(b =>
  `<div class="toolgroup d-flex align-items-center"><div class="grip"></div>${b.split(' ').map(n => n === '|' ? '<span class="vsep"></span>' : tool(n)).join('')}</div>`).join('');
const railItems = s => s.split(' ').map(n => n === '|' ? '<div class="hsep"></div>' : tool(n)).join('');
document.getElementById('rail').innerHTML =
  `<div class="railgroup pb-1"><div class="hgrip"></div>${railItems('cur comp* junc lbl script bus sub | term pin graph tape gen probe meter | ln bx circ arc clos txt sym mark2')}</div>
   <div class="railgroup mt-1"><div class="hgrip"></div>${railItems('rot rot~')}<input class="angle d-block" value="0°" aria-label="角度"><div class="hsep mt-1"></div>${railItems('mirh')}<button class="tool" aria-label="mirv"><svg width="16" height="16"><use href="#mirh" transform="rotate(-90 8 8)"/></svg></button></div>`;

// Schematic
const o = [], G = '#004000', M = '#800000', BODY = '#c8c8aa';
const RED = '#ff4040', BLUE = '#4040ff', GREY = '#808080';
const Y = k => Math.round(452.15 + 16.9 * k) + .5;
const line = (d, c, w = 3) => o.push(`<path d="${d}" fill="none" stroke="${c}" stroke-width="${w}" shape-rendering="crispEdges"/>`);
const text = (x, y, s, a = 'start', extra = '') => o.push(`<text x="${x}" y="${y}" text-anchor="${a}" ${extra}>${s}</text>`);
const rect = (x, y, w, h, f, s = 'none', sw = 3) => o.push(`<rect x="${x}" y="${y}" width="${w}" height="${h}" fill="${f}" stroke="${s}" stroke-width="${sw}" shape-rendering="crispEdges"/>`);
const dot = (x, y) => o.push(`<circle cx="${x}" cy="${y}" r="4.500" fill="${G}"/>`);
const bubble = (x, y) => o.push(`<circle cx="${x}" cy="${y}" r="5" fill="#dfdfd0" stroke="${M}" stroke-width="2.500"/>`);

for (let k = -8; k < 220; k++) {
  const w = k % 10 === 0 ? 2 : 1, gx = Math.round(285 + 16.9 * k) + (w === 1 ? .5 : 0), gy = Math.round(216 + 16.9 * k) + (w === 1 ? .5 : 0);
  line(`M${gx} 100V4000`, '#bdbdad', w); line(`M100 ${gy}H5000`, '#bdbdad', w);
}
rect(285.5, 131.5, 1690, 1183, 'none', '#0000b4', 1);

// Microcontroller
rect(471.5, 435.5, 237, 457, BODY, M);
o.push(`<path d="M472 447l6 5.500-6 5.500z" fill="${M}"/>`);
text(470, 430, 'U1', 'start', 'font-size="20"'); text(470, 907, 'AT89C52');
const left = [[0,19,'XTAL1'],[3,18,'XTAL2'],[7,9,'RST',RED],[12,29,'PSEN',RED],[13,30,'ALE',RED],[14,31,'EA',GREY],
  ...['P1.0/T2','P1.1/T2EX','P1.2','P1.3','P1.4','P1.5','P1.6','P1.7'].map((n, i) => [18 + i, i + 1, n, RED])];
left.forEach(([k, p, n, c]) => {
  line(`M437 ${Y(k)}H471`, M); text(454, Y(k) - 3, p, 'end'); text(480, Y(k) + 5, n);
  if (c) rect(457, Y(k) - 12.5, 7, 6, c);
});
const right = [...[...'01234567'].map(i => [+i, 39 - i, `P0.${i}/AD${i}`, i > 5 ? BLUE : RED]),
  ...[8,9,10,11,12,13,14,15].map((a, i) => [9 + i, 21 + i, `P2.${i}/A${a}`, i === 3 || i === 4 ? BLUE : RED]),
  ...['RXD','TXD','INT0','INT1','T0','T1','WR','RD'].map((n, i) => [18 + i, 10 + i, `P3.${i}/${n}`, RED])];
right.forEach(([k, p, n, c]) => {
  line(`M710 ${Y(k)}H744`, M); text(725, Y(k) - 3, p); text(701, Y(k) + 5, n, 'end'); rect(716, Y(k) - 12.5, 6, 6, c);
});
[[12,481,519],[14,481,499],[20,670,701],[21,670,701],[24,677,701],[25,680,701]].forEach(([k, a, b]) => line(`M${a} ${Y(k) - 8.5}H${b}`, '#1c1c1c', 2));
line(`M437 ${Y(7)}H421.500V368`, G);
['P22','P23','P24'].forEach((n, i) => {
  line(`M744 ${Y(11 + i)}H792`, G); dot(792.5, Y(11 + i)); text(759, Y(11 + i) - 4, n);
  line(`M1452 ${Y(6 + i)}H1501`, G); dot(1452.5, Y(6 + i)); text(1468, Y(6 + i) - 4, n);
});

// Power arrows
const up = (x, y) => o.push(`<path d="M${x} ${y + 2}l-8.500 16.500h17z" fill="none" stroke="${G}" stroke-width="2.500"/>`);
up(421.5, 367); up(1232.5, 485);
o.push(`<path d="M1385 ${Y(11)}l17-8v16z" fill="none" stroke="${G}" stroke-width="2.500"/>`);

// Display
rect(945.5, 199.5, 912, 202, '#008080', '#00008f');
rect(961, 216, 880, 161, '#04006c', '#000080', 2);
const seg = {
  a:'990,238 995,232 1042,232 1047,238 1042,244 995,244', b:'1049,239 1054,245 1052,289 1046,294 1041,289 1043,245',
  c:'1046,297 1052,303 1050,346 1044,352 1039,346 1041,303', d:'987,352 992,347 1039,347 1044,352 1039,358 992,358',
  e:'987,297 993,303 991,347 986,352 980,346 982,303', f:'988,239 994,245 993,289 988,294 982,289 983,245',
  g:'989,296 994,290 1041,290 1046,295 1040,301 993,301' };
const shape = { 0:'abcdef', 1:'bc', 2:'abged', 3:'abgcd', 4:'fgbc' };
[...'20241231'].forEach((ch, i) => {
  const x = 110 * i, lit = n => shape[ch].includes(n);
  if (i) line(`M${961.5 + x} 217V376`, '#000080', 2);
  // unlit segments first, so that lit ones lie on top
  const s = Object.entries(seg).sort(([p], [q]) => lit(p) - lit(q)).map(([n, pts]) => `<polygon points="${pts}" fill="${lit(n) ? '#00ffff' : '#00007c'}"/>`).join('');
  o.push(`<g transform="translate(${x})">${s}<circle cx="1054.500" cy="359.500" r="5.500" fill="#00007c"/></g>`);
});
const lcd = 'font-family="Liberation Mono, monospace" font-weight="700" font-size="22" fill="#000" stroke="#000" stroke-width=".5" xml:space="preserve"';
text(964, 395, 'ABCDEFG DP', 'start', lcd); text(1721, 395, '12345678', 'start', lcd);

// Resistor pack and segment bus
for (let i = 0; i < 8; i++) {
  const x = 961.5 + 17 * i, c = i > 5 ? BLUE : RED;
  line(`M${x} 420V620`, G); line(`M${x} 400V420M${x} 620V638`, M);
  line(`M744 ${Y(i)}H${x}`, G); dot(x, Y(i));
  rect(x - 12.5, 414, 8, 9, c); rect(x - 11.5, 624, 6, 6, c);
  text(0, 0, 9 - i, 'start', `transform="translate(${x - 3} 621) rotate(-90)"`);
}
line(`M1114.500 638V620`, M); line('M1116 621.500H1232.500V487', G); rect(1102, 624, 7, 6, RED);
text(0, 0, 1, 'start', 'transform="translate(1111 621) rotate(-90)"');
rect(945.5, 638.5, 185, 42, BODY, M);
text(944, 702, 'RP1', 'start', 'font-size="20"'); text(944, 721, 'RESPACK-8');
o.push('<g fill="none" stroke="#0000b4"><circle cx="1130.500" cy="723.500" r="6.500"/><path d="M1121 723.500h19M1130.500 714v19"/></g>');

// Decoder
rect(1536.5, 537.5, 101, 152, BODY, M);
text(1536, 531, 'U2', 'start', 'font-size="20"'); text(1535, 704, '74HC138');
[15,14,13,12,11,10,9,7].forEach((p, i) => {
  const x = Math.round(1722 + 16.9 * i) + .5, y = Y(6 + i), c = i === 1 ? BLUE : RED;
  line(`M1673 ${y}H${x}V420`, G); line(`M${x} 420V400M1648 ${y}H1673`, M); bubble(1643.5, y);
  rect(x - 13.5, 414, 9, 9, c); rect(1645, y - 12.5, 7, 6, c);
  text(1655, y - 3, p); text(1629, y + 5, 'Y' + i, 'end');
});
[[6,1,'A',RED],[7,2,'B',BLUE],[8,3,'C',BLUE],[11,6,'E1',RED],[12,4,'E2',BLUE],[13,5,'E3',BLUE]].forEach(([k, p, n, c]) => {
  line(`M1501 ${Y(k)}H${k > 11 ? 1527 : 1536}`, M); if (k > 11) bubble(1531.5, Y(k));
  text(1519, Y(k) - 3, p, 'end'); text(1545, Y(k) + 5, n); rect(1522, Y(k) - 12.5, 6, 6, c);
});
line(`M1384 ${Y(11)}H1501`, G); line(`M1501 ${Y(12)}H1468.500V739M1501 ${Y(13)}H1468.500`, G); dot(1468.5, Y(13));
line('M1451 739.500H1487M1459 748.500H1479M1466 756.500H1472', G);
document.getElementById('canvas').innerHTML = `<g transform="translate(-155 -113)">${o.join('')}</g>`;
</script>
</body>
</html>
